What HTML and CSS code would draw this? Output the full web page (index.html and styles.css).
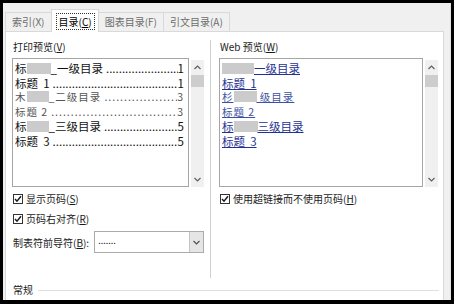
FILE: index.html
```html
<!DOCTYPE html>
<html lang="zh-CN">
<head>
<meta charset="UTF-8">
<title>目录</title>
<link rel="stylesheet" href="styles.css">
</head>
<body>
<div class="dialog">
  <!-- Tabs -->
  <div class="tabs">
    <div class="tab">索引(X)</div>
    <div class="tab active"><span class="focus">目录(<u>C</u>)</span></div>
    <div class="tab">图表目录(F)</div>
    <div class="tab">引文目录(A)</div>
  </div>

  <div class="panel">
    <div class="cols">
      <!-- Print preview -->
      <div class="col col-left">
        <div class="label">打印预览(<u>V</u>)</div>
        <div class="listwrap">
          <div class="listbox">
            <div class="toc-row"><span class="t">标<i class="blur" style="width:24px"></i>_一级目录</span><span class="dots"></span><span class="pg">1</span></div>
            <div class="toc-row"><span class="t">标题&nbsp;&nbsp;1</span><span class="dots"></span><span class="pg">1</span></div>
            <div class="toc-row lv2"><span class="t">木<i class="blur" style="width:22px"></i>_二级目录</span><span class="dots"></span><span class="pg">3</span></div>
            <div class="toc-row lv2"><span class="t">标题 2</span><span class="dots"></span><span class="pg">3</span></div>
            <div class="toc-row"><span class="t">标<i class="blur" style="width:22px"></i>_三级目录</span><span class="dots"></span><span class="pg">5</span></div>
            <div class="toc-row"><span class="t">标题&nbsp;&nbsp;3</span><span class="dots"></span><span class="pg">5</span></div>
          </div>
          <div class="scrollbar">
            <svg class="arrow" width="7" height="5" viewBox="0 0 7 5"><path d="M0.5 4 L3.5 1 L6.5 4" fill="none" stroke="#606060" stroke-width="1.2"/></svg>
            <div class="thumb"></div>
            <div class="track"></div>
            <svg class="arrow" width="7" height="5" viewBox="0 0 7 5"><path d="M0.5 1 L3.5 4 L6.5 1" fill="none" stroke="#606060" stroke-width="1.2"/></svg>
          </div>
        </div>
        <label class="check">
          <svg width="10" height="10" viewBox="0 0 10 10"><rect x="0.5" y="0.5" width="9" height="9" fill="#fff" stroke="#333"/><path d="M2 5 L4 7.2 L8 2.3" fill="none" stroke="#1a1a1a" stroke-width="1.5"/></svg>
          <span>显示页码(<u>S</u>)</span>
        </label>
        <label class="check check-2">
          <svg width="10" height="10" viewBox="0 0 10 10"><rect x="0.5" y="0.5" width="9" height="9" fill="#fff" stroke="#333"/><path d="M2 5 L4 7.2 L8 2.3" fill="none" stroke="#1a1a1a" stroke-width="1.5"/></svg>
          <span>页码右对齐(<u>R</u>)</span>
        </label>
        <div class="leader-row">
          <span class="leader-label">制表符前导符(<u>B</u>):</span>
          <div class="select">
            <span class="sel-value">.......</span>
            <span class="sel-btn"><svg width="7" height="5" viewBox="0 0 7 5"><path d="M0.5 1 L3.5 4 L6.5 1" fill="none" stroke="#505050" stroke-width="1.2"/></svg></span>
          </div>
        </div>
      </div>

      <div class="sep"></div>

      <!-- Web preview -->
      <div class="col col-right">
        <div class="label">Web 预览(<u>W</u>)</div>
        <div class="listwrap">
          <div class="listbox web">
            <div class="link"><i class="blur" style="width:32px"></i>一级目录</div>
            <div class="link">标题&nbsp;&nbsp;1</div>
            <div class="link lv2">杉<i class="blur" style="width:23px"></i> 级目录</div>
            <div class="link lv2">标题 2</div>
            <div class="link">标<i class="blur" style="width:24px"></i>三级目录</div>
            <div class="link">标题&nbsp;&nbsp;3</div>
          </div>
          <div class="scrollbar">
            <svg class="arrow" width="7" height="5" viewBox="0 0 7 5"><path d="M0.5 4 L3.5 1 L6.5 4" fill="none" stroke="#606060" stroke-width="1.2"/></svg>
            <div class="thumb"></div>
            <div class="track"></div>
            <svg class="arrow" width="7" height="5" viewBox="0 0 7 5"><path d="M0.5 1 L3.5 4 L6.5 1" fill="none" stroke="#606060" stroke-width="1.2"/></svg>
          </div>
        </div>
        <label class="check">
          <svg width="10" height="10" viewBox="0 0 10 10"><rect x="0.5" y="0.5" width="9" height="9" fill="#fff" stroke="#333"/><path d="M2 5 L4 7.2 L8 2.3" fill="none" stroke="#1a1a1a" stroke-width="1.5"/></svg>
          <span>使用超链接而不使用页码(<u>H</u>)</span>
        </label>
      </div>
    </div>

    <div class="general">
      <span>常规</span>
      <div class="rule"></div>
    </div>
  </div>
</div>
</body>
</html>
```

FILE: styles.css
```css
* {
  box-sizing: border-box;
}
body {
  margin: 0;
  width: 454px;
  height: 304px;
  padding: 3px 3px 4px 3px;
  background: #000;
  font-family: "Noto Sans CJK SC", "Noto Sans", sans-serif;
  font-size: 10px;
  color: #1a1a1a;
  overflow: hidden;
}
u {
  text-decoration: underline;
  text-underline-offset: 1px;
}
.dialog {
  height: 297px;
  background: #f0f0f0;
  padding: 6px 0 0 2px;
  border-right: 1px solid #e2e2e2;
}

/* Tabs */
.tabs {
  display: flex;
  align-items: flex-end;
  height: 22px;
}
.tab {
  height: 19px;
  line-height: 18px;
  padding: 0 6px;
  border: 1px solid #d9d9d9;
  border-bottom: none;
  margin-right: -1px;
  color: #6d6d6d;
  white-space: nowrap;
}
.tab.active {
  position: relative;
  z-index: 1;
  height: 23px;
  margin-bottom: -1px;
  padding: 3px 3px 0 4px;
  background: #fff;
  color: #000;
}
.focus {
  display: block;
  line-height: 15px;
  padding: 0 2px;
  border: 1px dotted #333;
}
.panel {
  width: 439px;
  height: 269px;
  background: #fff;
  border: 1px solid #d9d9d9;
  border-bottom: none;
}

/* Columns */
.cols {
  display: flex;
  height: 246px;
  padding-top: 9px;
}
.col-left {
  width: 192px;
  margin-left: 6px;
}
.col-right {
  width: 219px;
  margin-left: 8px;
}
.sep {
  width: 1px;
  height: 238px;
  margin: -1px 0 0 6px;
  background: #d0d0d0;
}
.label {
  line-height: 12px;
  padding-left: 1px;
  margin-bottom: 5px;
}
.listwrap {
  display: flex;
  height: 129px;
  gap: 2px;
}
.listbox {
  width: 177px;
  border: 1px solid #a6a6a6;
  padding: 2px 4px 0 2px;
  font-size: 11.5px;
  line-height: 14.5px;
  color: #111;
}
.listbox.web {
  width: 204px;
}
.toc-row {
  display: flex;
  white-space: nowrap;
}
.toc-row .dots {
  flex: 1;
  min-width: 0;
  overflow: hidden;
  padding-left: 3px;
}
.toc-row .dots::before {
  content: "......................................................................................";
}
.lv2 {
  font-size: 10.5px;
  letter-spacing: 1px;
  color: #555;
}
.blur {
  display: inline-block;
  height: 11px;
  vertical-align: -1px;
  background: #cbcbcb;
}
.link {
  color: #1f3293;
  text-decoration: underline;
  text-underline-offset: 1px;
  white-space: nowrap;
}
.link.lv2 {
  color: #3c51a3;
}
.scrollbar {
  width: 13px;
  display: flex;
  flex-direction: column;
  align-items: center;
  background: #f0f0f0;
  margin-top: 2px;
}
.scrollbar .arrow {
  margin: 5px 0;
}
.thumb {
  width: 13px;
  height: 12px;
  background: #cdcdcd;
}
.track {
  flex: 1;
}

/* Options */
.check {
  display: flex;
  align-items: center;
  gap: 3px;
  line-height: 12px;
  margin-top: 6px;
  padding-left: 1px;
}
.check-2 {
  margin-top: 8px;
}
.leader-row {
  display: flex;
  align-items: center;
  gap: 5px;
  margin-top: 6px;
  padding-left: 1px;
}
.leader-label {
  white-space: nowrap;
}
.select {
  display: flex;
  flex-shrink: 0;
  width: 110px;
  height: 22px;
  border: 1px solid #ababab;
  background: #fff;
}
.sel-value {
  flex: 1;
  padding-left: 3px;
  line-height: 18px;
  font-size: 9px;
}
.sel-btn {
  width: 14px;
  display: flex;
  align-items: center;
  justify-content: center;
  background: #e5e5e5;
  border-left: 1px solid #c4c4c4;
}

/* General section */
.general {
  display: flex;
  align-items: center;
  margin-top: 6px;
  padding-left: 7px;
  line-height: 12px;
}
.rule {
  flex: 1;
  height: 1px;
  margin: 0 4px 0 5px;
  background: #e0e0e0;
}
```
